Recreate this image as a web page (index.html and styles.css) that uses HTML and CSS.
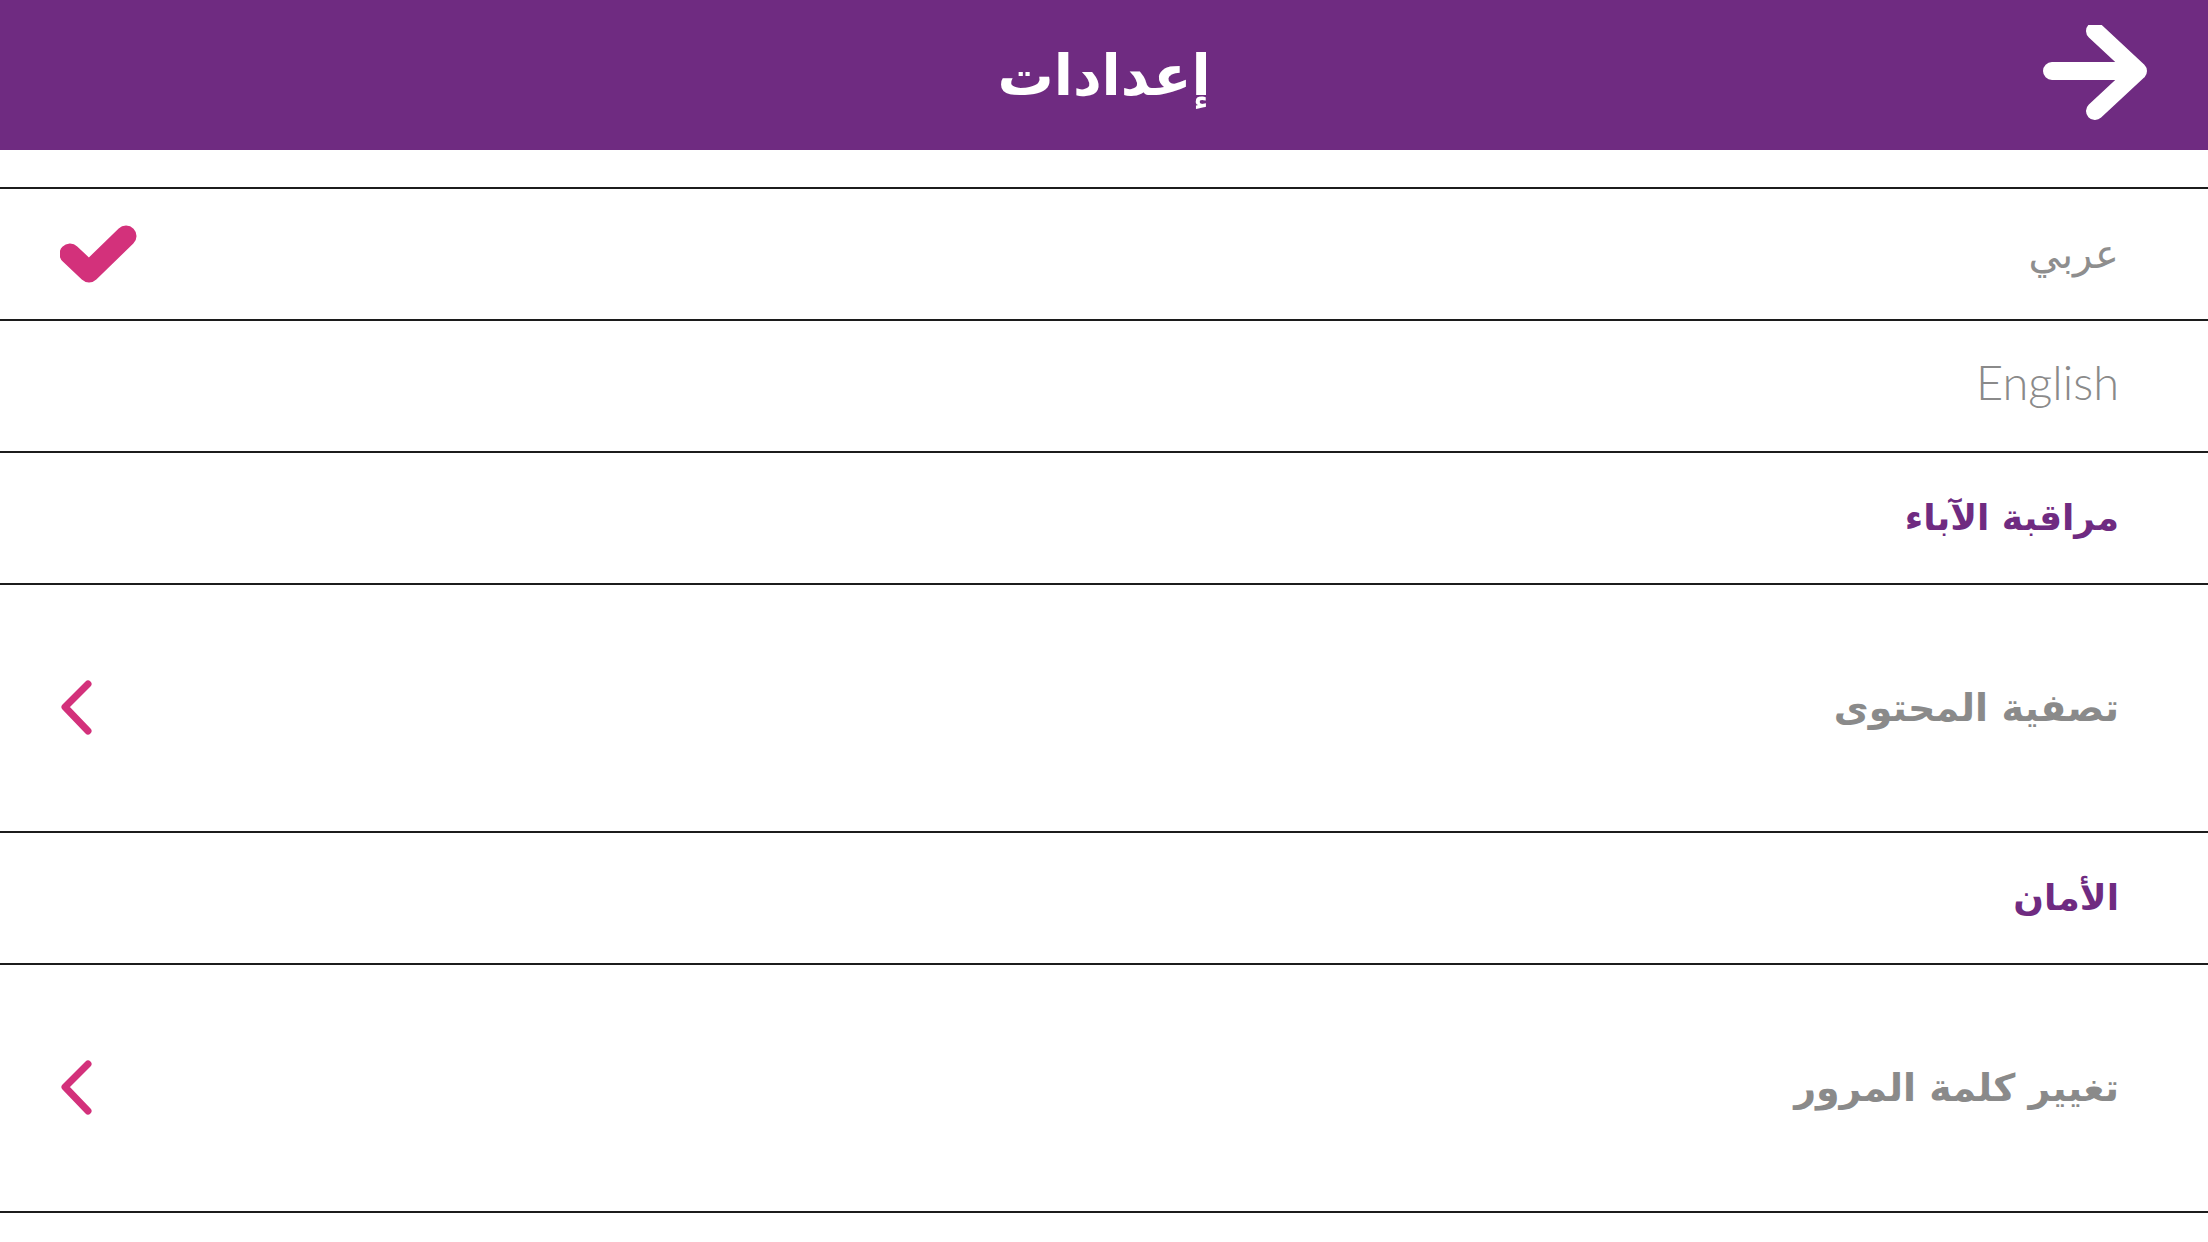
FILE: index.html
```html
<!DOCTYPE html>
<html lang="ar" dir="rtl">
<head>
    <meta charset="UTF-8">
    <meta name="viewport" content="width=device-width, initial-scale=1.0">
    <title>إعدادات</title>
    <link rel="stylesheet" href="styles.css">
</head>
<body>
    <div class="top-bar">
        <div class="back-btn">
            <svg width="110" height="100" viewBox="0 0 110 100">
                <path d="M10 46 H96 M53 6 L96 46 L53 86" fill="none" stroke="#fff" stroke-width="18" stroke-linecap="round" stroke-linejoin="round"/>
            </svg>
        </div>
        <h1 class="page-title">إعدادات</h1>
        <div></div>
    </div>

    <div class="settings-list">
        <div class="row">
            <span class="label light">عربي</span>
            <svg class="check" width="84" height="64" viewBox="0 0 84 64">
                <path d="M10 32 L29 50 L66 14" fill="none" stroke="#d3317b" stroke-width="21" stroke-linecap="round" stroke-linejoin="round"/>
            </svg>
        </div>
        <div class="row">
            <span class="label latin">English</span>
        </div>
        <div class="row">
            <span class="label section">مراقبة الآباء</span>
        </div>
        <div class="row tall">
            <span class="label">تصفية المحتوى</span>
            <svg class="chevron" width="40" height="60" viewBox="0 0 40 60">
                <path d="M28 6 L5 29 L28 53" fill="none" stroke="#d3317b" stroke-width="7" stroke-linecap="round" stroke-linejoin="round"/>
            </svg>
        </div>
        <div class="row">
            <span class="label section">الأمان</span>
        </div>
        <div class="row tall">
            <span class="label">تغيير كلمة المرور</span>
            <svg class="chevron" width="40" height="60" viewBox="0 0 40 60">
                <path d="M28 6 L5 29 L28 53" fill="none" stroke="#d3317b" stroke-width="7" stroke-linecap="round" stroke-linejoin="round"/>
            </svg>
        </div>
    </div>
</body>
</html>
```

FILE: styles.css
```css
body {
    margin: 0;
    background: #fff;
    font-family: "DejaVu Sans", "Noto Sans", sans-serif;
}
.top-bar {
    height: 150px;
    background: #6f2b81;
    display: grid;
    grid-template-columns: 1fr auto 1fr;
    align-items: center;
}
.back-btn {
    padding-right: 56px;
    display: flex;
    align-items: center;
}
.page-title {
    margin: 0;
    color: #fff;
    font-size: 56px;
    font-weight: bold;
}
.settings-list {
    margin-top: 37px;
    border-top: 2px solid #1c1c1c;
}
.row {
    height: 130px;
    border-bottom: 2px solid #1c1c1c;
    display: flex;
    align-items: center;
    justify-content: space-between;
    padding: 0 89px 0 60px;
}
.row.tall {
    height: 246px;
}
.label {
    color: #8a8a8a;
    font-size: 38px;
    font-weight: bold;
    line-height: 1;
}
.label.light {
    font-weight: normal;
    font-size: 40px;
    color: #8e8e8e;
}
.label.latin {
    font-family: Lato, "Open Sans", sans-serif;
    font-weight: 300;
    font-size: 47px;
    color: #8a8a8a;
    margin-bottom: 8px;
}
.label.section {
    color: #6f2b81;
    font-size: 36px;
}
.check, .chevron {
    display: block;
}
```
